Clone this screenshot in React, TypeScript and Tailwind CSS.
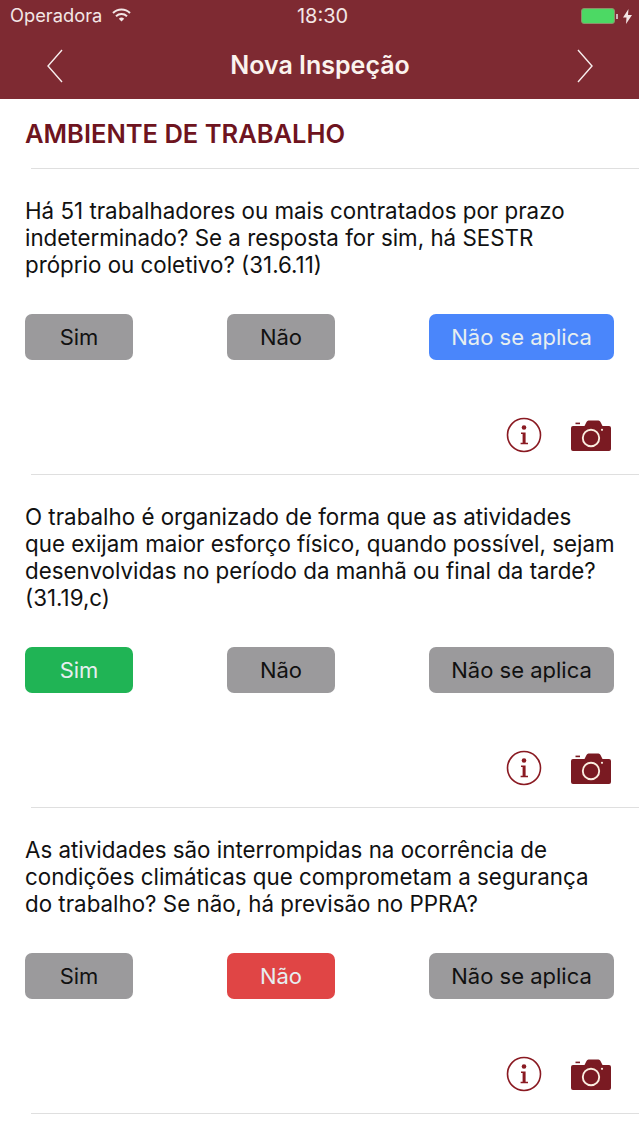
type Answer = "sim" | "nao" | "na" | null;

const questions: { text: string[]; answer: Answer }[] = [
  {
    text: [
      "Há 51 trabalhadores ou mais contratados por prazo",
      "indeterminado? Se a resposta for sim, há SESTR",
      "próprio ou coletivo? (31.6.11)",
    ],
    answer: "na",
  },
  {
    text: [
      "O trabalho é organizado de forma que as atividades",
      "que exijam maior esforço físico, quando possível, sejam",
      "desenvolvidas no período da manhã ou final da tarde?",
      "(31.19,c)",
    ],
    answer: "sim",
  },
  {
    text: [
      "As atividades são interrompidas na ocorrência de",
      "condições climáticas que comprometam a segurança",
      "do trabalho? Se não, há previsão no PPRA?",
    ],
    answer: "nao",
  },
];

function InfoIcon() {
  return (
    <svg width="36" height="36" viewBox="0 0 36 36" fill="none">
      <circle cx="18" cy="18" r="16.5" stroke="#8a1a22" strokeWidth="1.6" />
      <circle cx="18" cy="10.5" r="2.3" fill="#8a1a22" />
      <path d="M15 15.5h4.6v10.2H22v1.5h-7.4v-1.5h2V17h-1.6z" fill="#8a1a22" />
    </svg>
  );
}

function CameraIcon() {
  return (
    <svg width="40" height="31" viewBox="0 0 40 31">
      <path
        fillRule="evenodd"
        fill="#7a1a22"
        d="M2 6h11.5l2-4Q16.2.5 17.5.5h10q1.3 0 2 1.5L31.5 6H38q2 0 2 2v21q0 2-2 2H2q-2 0-2-2V8q0-2 2-2z"
      />
      <circle cx="20" cy="18" r="8.2" fill="none" stroke="#fbeee0" strokeWidth="1.9" />
      <circle cx="31" cy="9.8" r="1.1" fill="#fbeee0" />
      <rect x="4.5" y="2.6" width="4.5" height="1.6" fill="#7a1a22" />
    </svg>
  );
}

function Chevron({ right }: { right?: boolean }) {
  return (
    <svg width="16" height="34" viewBox="0 0 16 34" fill="none" stroke="#f7eeee" strokeWidth="1.4">
      <path d={right ? "M1 1l14 16L1 33" : "M15 1L1 17l14 16"} />
    </svg>
  );
}

function AnswerButton({ label, active, color, wide }: { label: string; active: boolean; color: string; wide?: boolean }) {
  return (
    <div
      className={`h-[46px] flex items-center justify-center rounded-[7px] text-[22px] ${wide ? "w-[185px]" : "w-[108px]"} ${
        active ? `${color} text-[#e6eef0]` : "bg-[#9b9a9c] text-[#111]"
      }`}
    >
      {label}
    </div>
  );
}

function Question({ text, answer }: { text: string[]; answer: Answer }) {
  return (
    <div className="border-t border-[#dfdfdf] ml-[31px]">
      <div className="-ml-[6px] pt-[28px] pr-[25px]">
        <div className="text-[22.35px] leading-[27px] text-[#111] whitespace-nowrap">
          {text.map((line, i) => (
            <div key={i}>{line}</div>
          ))}
        </div>
        <div className="flex justify-between mt-[36px]">
          <AnswerButton label="Sim" active={answer === "sim"} color="bg-[#20b455]" />
          <AnswerButton label="Não" active={answer === "nao"} color="bg-[#e04545]" />
          <AnswerButton label="Não se aplica" active={answer === "na"} color="bg-[#4a86fb]" wide />
        </div>
        <div className="flex justify-end items-center gap-[29px] mt-[57px] mb-[21px] h-[36px] mr-[3px]">
          <InfoIcon />
          <CameraIcon />
        </div>
      </div>
    </div>
  );
}

export default function App() {
  return (
    <div className="w-[639px] h-[1136px] bg-white overflow-hidden font-['Inter',sans-serif]">
      <div className="h-[99px] bg-[#7e2a32] text-white">
        <div className="h-[32px] flex items-center relative pl-[10px] pr-[7px] text-[18.3px] text-[#f3e6e6]">
          <span>Operadora</span>
          <svg className="ml-[10px] mb-[2px]" width="19" height="14" viewBox="0 0 19 14" fill="none" stroke="#f3e6e6" strokeWidth="2">
            <path d="M1 5a12 12 0 0 1 17 0" />
            <path d="M4 8.2a8 8 0 0 1 11 0" />
            <path d="M9.5 13.5 6.8 10.8a4 4 0 0 1 5.4 0z" fill="#f3e6e6" stroke="none" />
          </svg>
          <span className="absolute left-[6px] right-0 text-center text-[20px]">18:30</span>
          <div className="ml-auto flex items-center">
            <div className="w-[34px] h-[16px] rounded-[3px] bg-[#4cd964] border border-[#8f8f6a]" />
            <div className="w-[2px] h-[5px] bg-[#c9b5b5] ml-[1px]" />
            <svg className="ml-[5px]" width="9" height="15" viewBox="0 0 9 15">
              <path d="M5.5 0 0 8.5h3.5L3 15l6-9H5z" fill="#f3e6e6" />
            </svg>
          </div>
        </div>
        <div className="h-[67px] flex items-center justify-between pl-[47px] pr-[46px]">
          <Chevron />
          <span className="text-[25px] font-semibold text-[#fbf3ee]">Nova Inspeção</span>
          <Chevron right />
        </div>
      </div>
      <div className="h-[69px] flex items-center pl-[25px] pt-[2px] text-[25.5px] font-semibold text-[#6e1420]">
        AMBIENTE DE TRABALHO
      </div>
      {questions.map((q, i) => (
        <Question key={i} text={q.text} answer={q.answer} />
      ))}
      <div className="border-t border-[#dfdfdf] ml-[31px]" />
    </div>
  );
}
